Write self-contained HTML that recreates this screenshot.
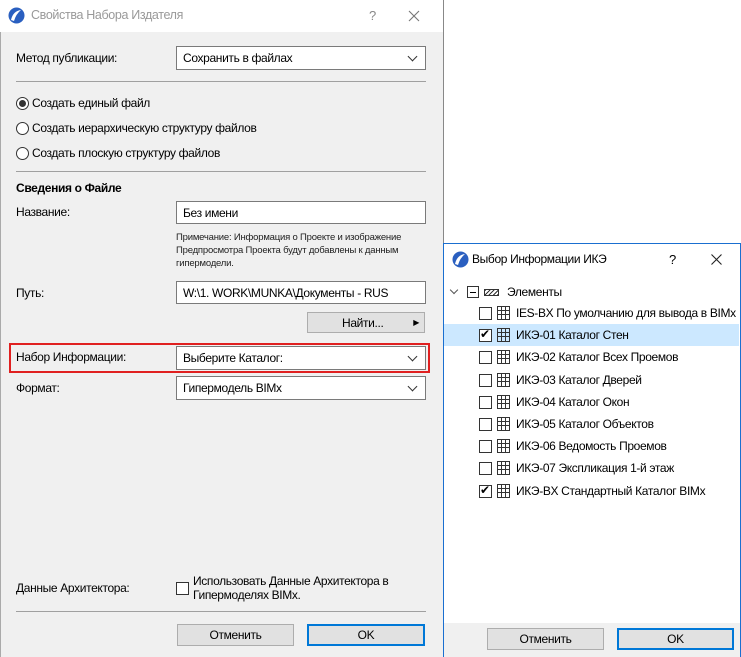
<!DOCTYPE html>
<html><head><meta charset="utf-8"><style>
*{margin:0;padding:0;box-sizing:border-box}
body{width:741px;height:657px;background:#fff;position:relative;overflow:hidden;font-family:"Liberation Sans","DejaVu Sans",sans-serif;font-size:12px;color:#000;letter-spacing:-0.35px}
.a{position:absolute;white-space:nowrap}
.dlg{position:absolute;background:#f0f0f0}
.inp{position:absolute;background:#fff;border:1px solid #7a7a7a;height:23px;padding:4px 6px 0;font-size:12px}
.dd:after{content:"";position:absolute;right:9px;top:6px;width:6px;height:6px;border-right:1px solid #333;border-bottom:1px solid #333;transform:rotate(45deg)}
.radio{position:absolute;width:13px;height:13px;border:1px solid #333;border-radius:50%;background:#fff}
.cb{position:absolute;width:13px;height:13px;border:1px solid #333;background:#fff}
.btn{position:absolute;background:#e1e1e1;border:1px solid #adadad;text-align:center;line-height:20px;font-size:12px}
.ok{border:2px solid #0078d7;line-height:18px}
.sep{position:absolute;height:1px;background:#a0a0a0}
.grid{position:absolute;width:13px;height:14px;border:1px solid #333;background:
linear-gradient(#333,#333) 3px 0/1px 100% no-repeat,linear-gradient(#333,#333) 7px 0/1px 100% no-repeat,
linear-gradient(#333,#333) 0 3px/100% 1px no-repeat,linear-gradient(#333,#333) 0 7px/100% 1px no-repeat;}
</style></head><body>
<div class="dlg" style="left:0;top:0;width:444px;height:657px;border-right:1px solid #888;border-left:1px solid #aaa"></div>
<div class="a" style="left:0;top:0;width:444px;height:32px;background:#fff;border-right:1px solid #888"></div>
<svg class="a" style="left:8px;top:7px" width="17" height="17"><circle cx="8.5" cy="8.5" r="8" fill="#2a5fc0"/><path d="M3 13 Q5 4 13 3 Q8 7 6 14Z" fill="#fff"/></svg>
<div class="a" style="left:31px;top:8px;color:#999;font-size:12.5px">Свойства Набора Издателя</div>
<div class="a" style="left:369px;top:8px;color:#888;font-size:13px">?</div>
<svg class="a" style="left:408px;top:10px" width="12" height="12"><path d="M1 1L11 11M11 1L1 11" stroke="#777" stroke-width="1.1"/></svg>

<div class="a" style="left:16px;top:51px">Метод публикации:</div>
<div class="inp dd" style="left:176px;top:46px;width:250px;height:24px">Сохранить в файлах</div>
<div class="sep" style="left:16px;top:81px;width:410px"></div>
<div class="radio" style="left:16px;top:97px"></div><div class="a" style="left:19px;top:100px;width:7px;height:7px;border-radius:50%;background:#333"></div>
<div class="a" style="left:32px;top:96px">Создать единый файл</div>
<div class="radio" style="left:16px;top:122px"></div><div class="a" style="left:32px;top:121px">Создать иерархическую структуру файлов</div>
<div class="radio" style="left:16px;top:147px"></div><div class="a" style="left:32px;top:146px">Создать плоскую структуру файлов</div>
<div class="sep" style="left:16px;top:171px;width:410px"></div>
<div class="a" style="left:16px;top:181px;font-weight:bold">Сведения о Файле</div>
<div class="a" style="left:16px;top:205px">Название:</div>
<div class="inp" style="left:176px;top:201px;width:250px">Без имени</div>
<div class="a" style="left:176px;top:231px;font-size:9.5px;line-height:13px;color:#222;letter-spacing:-0.2px">Примечание: Информация о Проекте и изображение<br>Предпросмотра Проекта будут добавлены к данным<br>гипермодели.</div>
<div class="a" style="left:16px;top:286px">Путь:</div>
<div class="inp" style="left:176px;top:281px;width:250px">W:\1. WORK\MUNKA\Документы - RUS</div>
<div class="btn" style="left:307px;top:312px;width:118px;height:21px;text-align:left;padding-left:34px">Найти...<span style="position:absolute;right:5px;font-size:8px">▶</span></div>
<div class="a" style="left:9px;top:343px;width:421px;height:30px;border:2px solid #e02020"></div>
<div class="a" style="left:16px;top:350px">Набор Информации:</div>
<div class="inp dd" style="left:176px;top:346px;width:250px;height:24px">Выберите Каталог:</div>
<div class="a" style="left:16px;top:381px">Формат:</div>
<div class="inp dd" style="left:176px;top:376px;width:250px;height:24px">Гипермодель BIMx</div>
<div class="a" style="left:16px;top:581px">Данные Архитектора:</div>
<div class="cb" style="left:176px;top:582px"></div>
<div class="a" style="left:193px;top:574px;line-height:14px">Использовать Данные Архитектора в<br>Гипермоделях BIMx.</div>
<div class="sep" style="left:16px;top:611px;width:410px"></div>
<div class="btn" style="left:177px;top:624px;width:117px;height:22px">Отменить</div>
<div class="btn ok" style="left:307px;top:624px;width:118px;height:22px;background:#e1e1e1">OK</div>

<div class="dlg" style="left:443px;top:243px;width:298px;height:414px;border:1px solid #1a6fd0;border-bottom:none"></div>
<div class="a" style="left:444px;top:244px;width:296px;height:33px;background:#fff"></div>
<div class="a" style="left:444px;top:277px;width:296px;height:346px;background:#fff"></div>
<svg class="a" style="left:452px;top:251px" width="17" height="17"><circle cx="8.5" cy="8.5" r="8" fill="#2a5fc0"/><path d="M3 13 Q5 4 13 3 Q8 7 6 14Z" fill="#fff"/></svg>
<div class="a" style="left:472px;top:252px">Выбор Информации ИКЭ</div>
<div class="a" style="left:669px;top:252px;font-size:13px">?</div>
<svg class="a" style="left:711px;top:254px" width="11" height="11"><path d="M0.5 0.5L10.5 10.5M10.5 0.5L0.5 10.5" stroke="#222" stroke-width="1.1"/></svg>
<div class="a" style="left:451px;top:287px;width:6px;height:6px;border-right:1px solid #555;border-bottom:1px solid #555;transform:rotate(45deg)"></div>
<div class="cb" style="left:467px;top:286px;width:12px;height:12px"></div><div class="a" style="left:470px;top:292px;width:6px;height:1px;background:#000"></div>
<div class="a" style="left:484px;top:289px;width:15px;height:7px;border:1px solid #333;background:repeating-linear-gradient(135deg,#333 0 1px,#fff 1px 3px)"></div>
<div class="a" style="left:507px;top:285px">Элементы</div>
<div class="a" style="left:444px;top:324px;width:295px;height:22px;background:#cce8ff"></div>
<div id="rows"></div>
<div class="btn" style="left:487px;top:628px;width:117px;height:22px">Отменить</div>
<div class="btn ok" style="left:617px;top:628px;width:117px;height:22px">OK</div>
<script>
var t=["IES-BX По умолчанию для вывода в BIMx","ИКЭ-01 Каталог Стен","ИКЭ-02 Каталог Всех Проемов","ИКЭ-03 Каталог Дверей","ИКЭ-04 Каталог Окон","ИКЭ-05 Каталог Объектов","ИКЭ-06 Ведомость Проемов","ИКЭ-07 Экспликация 1-й этаж","ИКЭ-BX Стандартный Каталог BIMx"];
var h="";t.forEach(function(s,i){var y=313+i*22.2;var c=(i==1||i==8);
h+='<div class="cb" style="left:479px;top:'+(y-6)+'px">'+(c?'<span style="position:absolute;left:0;top:-3px;font-size:12px">✔</span>':'')+'</div><div class="grid" style="left:497px;top:'+(y-7)+'px"></div><div class="a" style="left:516px;top:'+(y-7)+'px">'+s+'</div>';});
document.getElementById("rows").innerHTML=h;
</script>
</body></html>
